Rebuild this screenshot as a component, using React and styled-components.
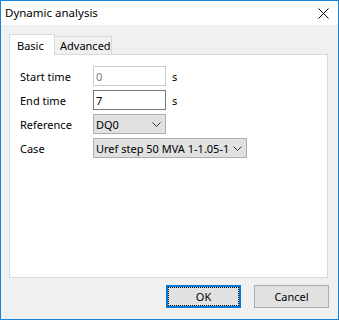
import React from "react";
import styled, { createGlobalStyle } from "styled-components";

const Global = createGlobalStyle`
  html, body { margin: 0; padding: 0; background: #ffffff; }
  body { font-family: "Noto Sans", "Liberation Sans", sans-serif; font-size: 11px; color: #000; }
  * { box-sizing: border-box; }
`;

const Window = styled.div`
  width: 339px;
  height: 320px;
  border: 1px solid #1883d7;
  background: #f0f0f0;
  display: flex;
  flex-direction: column;
`;

const TitleBar = styled.div`
  height: 24px;
  background: #ffffff;
  display: flex;
  align-items: center;
  justify-content: space-between;
  padding: 0 9px 0 4px;
  flex-shrink: 0;
`;

const Title = styled.span`
  font-size: 11.5px;
  line-height: 1;
`;

const Body = styled.div`
  flex: 1;
  display: flex;
  flex-direction: column;
  padding: 9px 10px 0 8px;
`;

const TabStrip = styled.div`
  display: flex;
  align-items: flex-end;
  height: 21px;
  position: relative;
  z-index: 1;
  margin-bottom: -1px;
`;

const Tab = styled.div`
  height: ${(p) => (p.$active ? "21px" : "19px")};
  padding: 0 ${(p) => (p.$active ? "7px" : "5px")};
  display: flex;
  align-items: center;
  border: 1px solid #d9d9d9;
  border-bottom: ${(p) => (p.$active ? "none" : "1px solid #d9d9d9")};
  border-left: ${(p) => (p.$active ? "1px solid #d9d9d9" : "none")};
  background: ${(p) => (p.$active ? "#ffffff" : "#f0f0f0")};
  width: ${(p) => p.$w}px;
`;

const Panel = styled.div`
  height: 224px;
  background: #ffffff;
  border: 1px solid #d9d9d9;
  padding: 11px 10px 0 10px;
  display: flex;
  flex-direction: column;
  gap: 4px;
`;

const Row = styled.div`
  display: flex;
  align-items: center;
  height: 20px;
`;

const Label = styled.span`
  width: 73px;
  flex-shrink: 0;
`;

const TextBox = styled.div`
  width: 73px;
  height: 20px;
  border: 1px solid ${(p) => (p.$disabled ? "#cccccc" : "#7a7a7a")};
  background: #ffffff;
  color: ${(p) => (p.$disabled ? "#7a7a7a" : "#000")};
  padding: 0 0 0 2px;
  display: flex;
  align-items: center;
`;

const Unit = styled.span`
  margin-left: 6px;
`;

const Select = styled.div`
  width: ${(p) => p.$w}px;
  height: 20px;
  border: 1px solid #adadad;
  background: #e1e1e1;
  display: flex;
  align-items: center;
  padding: 0 0 0 2px;
`;

const SelectText = styled.span`
  flex: 1;
  overflow: hidden;
  white-space: nowrap;
`;

const Chevron = styled.span`
  width: 17px;
  height: 18px;
  display: flex;
  align-items: center;
  justify-content: center;
  flex-shrink: 0;
`;

const Footer = styled.div`
  display: flex;
  justify-content: flex-end;
  gap: 13px;
  padding: 7px 0 0 0;
  margin-right: -1px;
`;

const Button = styled.div`
  width: 75px;
  height: 23px;
  background: #e1e1e1;
  border: ${(p) => (p.$default ? "2px solid #0078d7" : "1px solid #adadad")};
  display: flex;
  align-items: center;
  justify-content: center;
  position: relative;
  &::after {
    content: "";
    display: ${(p) => (p.$default ? "block" : "none")};
    position: absolute;
    inset: 0;
    border: 1px dotted #000;
  }
`;

const ChevronIcon = () => (
  <svg width="9" height="5" viewBox="0 0 9 5">
    <polyline points="0.5,0.5 4.5,4.5 8.5,0.5" fill="none" stroke="#333" strokeWidth="1" />
  </svg>
);

const CloseIcon = () => (
  <svg width="11" height="11" viewBox="0 0 11 11">
    <path d="M0.5 0.5 L10.5 10.5 M10.5 0.5 L0.5 10.5" stroke="#000" strokeWidth="1" />
  </svg>
);

export default function App() {
  return (
    <>
      <Global />
      <Window>
        <TitleBar>
          <Title>Dynamic analysis</Title>
          <CloseIcon />
        </TitleBar>
        <Body>
          <TabStrip>
            <Tab $active $w={46}>Basic</Tab>
            <Tab $w={57}>Advanced</Tab>
          </TabStrip>
          <Panel>
            <Row>
              <Label>Start time</Label>
              <TextBox $disabled>0</TextBox>
              <Unit>s</Unit>
            </Row>
            <Row>
              <Label>End time</Label>
              <TextBox>7</TextBox>
              <Unit>s</Unit>
            </Row>
            <Row>
              <Label>Reference</Label>
              <Select $w={73}>
                <SelectText>DQ0</SelectText>
                <Chevron><ChevronIcon /></Chevron>
              </Select>
            </Row>
            <Row>
              <Label>Case</Label>
              <Select $w={154}>
                <SelectText>Uref step 50 MVA 1-1.05-1</SelectText>
                <Chevron><ChevronIcon /></Chevron>
              </Select>
            </Row>
          </Panel>
          <Footer>
            <Button $default>OK</Button>
            <Button>Cancel</Button>
          </Footer>
        </Body>
      </Window>
    </>
  );
}
